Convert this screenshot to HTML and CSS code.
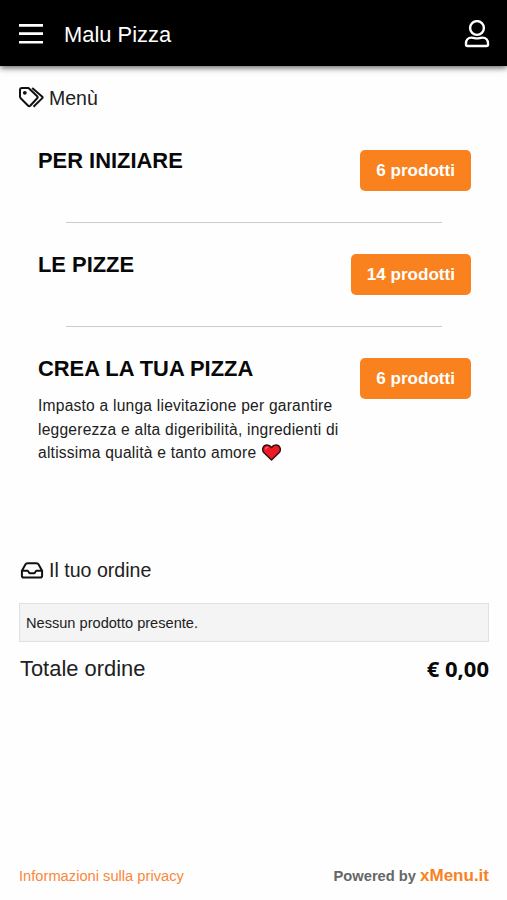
FILE: index.html
```
<!DOCTYPE html>
<html lang="it">
<head>
    <meta charset="UTF-8">
    <meta name="viewport" content="width=device-width, initial-scale=1.0">
    <title>Malu Pizza</title>
    <link rel="stylesheet" href="styles.css">
</head>
<body>
    <header class="navbar">
        <svg class="menu-icon" viewBox="0 0 24 20"><path d="M0 1.4h24M0 9.6h24M0 18.2h24"/></svg>
        <h1>Malu Pizza</h1>
        <svg class="user-icon" viewBox="0 0 26 28">
            <circle cx="13" cy="8" r="6.9"/>
            <path d="M7.5 17.6C10.5 17.6 10.5 18.4 13 18.4S15.5 17.6 18.5 17.6C22 17.6 24 20 24 23.3V24.5Q24 26 22.5 26H3.5Q2 26 2 24.5V23.3C2 20 4 17.6 7.5 17.6Z"/>
        </svg>
    </header>

    <main>
        <h2 class="heading">
            <svg class="tags-icon" viewBox="0 0 25 21">
                <path d="M1 3Q1 1 3 1H9.5L18.2 9.3Q19.2 10.3 18.2 11.3L11.2 18.7Q10.2 19.7 9.2 18.7L1.7 11.3Q1 10.6 1 9.6Z"/>
                <path d="M13.2 1L23.3 9.7Q24 10.4 23.3 11.1L14.5 19.8"/>
                <circle class="dot" cx="5.8" cy="5.8" r="1.9"/>
            </svg>
            <span>Menù</span>
        </h2>

        <ul class="categories">
            <li>
                <div class="info"><h3>PER INIZIARE</h3></div>
                <a class="btn">6 prodotti</a>
            </li>
            <li>
                <div class="info"><h3>LE PIZZE</h3></div>
                <a class="btn">14 prodotti</a>
            </li>
            <li>
                <div class="info">
                    <h3>CREA LA TUA PIZZA</h3>
                    <p>Impasto a lunga lievitazione per garantire<br>leggerezza e alta digeribilità, ingredienti di<br>altissima qualità e tanto amore
                        <svg class="heart" viewBox="0 0 19 17"><path d="M9.5 16L2 8.8C-.8 5.5 1.3 1 5 1C7.2 1 8.7 2.2 9.5 3.5C10.3 2.2 11.8 1 14 1C17.7 1 19.8 5.5 17 8.8Z"/><path class="shine" d="M3.5 5.5Q4 3.3 6 3.2"/></svg>
                    </p>
                </div>
                <a class="btn">6 prodotti</a>
            </li>
        </ul>

        <h2 class="heading order">
            <svg class="inbox-icon" viewBox="0 0 24 17">
                <path d="M1.9 8.7L5.4 2.5Q6.1 1.3 7.5 1.3H16.5Q17.9 1.3 18.6 2.5L22.1 8.7V13.7Q22.1 15.5 20.3 15.5H3.7Q1.9 15.5 1.9 13.7ZM1.9 8.7H7.8L9.5 11.2H14.5L16.2 8.7H22.1"/>
            </svg>
            <span>Il tuo ordine</span>
        </h2>
        <div class="empty">Nessun prodotto presente.</div>
        <div class="total">
            <span>Totale ordine</span>
            <strong>€ 0,00</strong>
        </div>
    </main>

    <footer>
        <a class="privacy">Informazioni sulla privacy</a>
        <div class="powered">Powered by <b>xMenu.it</b></div>
    </footer>
</body>
</html>
```
FILE: styles.css
```
*{
    margin: 0;
    padding: 0;
    box-sizing: border-box;
    list-style: none;
}
body{
    min-height: 900px;
    display: flex;
    flex-direction: column;
    background: #fefefe;
    color: #212121;
    font-family: "Liberation Sans", Arial, sans-serif;
}
svg{
    fill: none;
    stroke: currentColor;
    stroke-width: 2;
    stroke-linejoin: round;
    flex: none;
}
.navbar{
    display: flex;
    align-items: center;
    height: 66px;
    padding: 2px 17px 0 19px;
    background: #000;
    color: #fff;
    box-shadow: 0 2px 6px rgba(0, 0, 0, 0.6);
}
.navbar h1{
    margin-left: 21px;
    padding-top: 1px;
    font-size: 21.9px;
    font-weight: normal;
}
.menu-icon{
    width: 24px;
    height: 20px;
    stroke-width: 2.6;
}
.user-icon{
    width: 26px;
    height: 28px;
    margin-left: auto;
    stroke-width: 2.4;
}
main{
    flex: 1;
    padding: 20px 18px 0 19px;
}
.heading{
    display: flex;
    align-items: center;
    height: 24px;
    font-size: 19.5px;
    font-weight: normal;
}
.heading.order{
    padding-left: 1px;
    font-size: 19.6px;
}
.heading svg{
    margin-right: 5px;
    stroke: #111;
}
.tags-icon{
    width: 25px;
    height: 21px;
    margin-top: -1px;
}
.tags-icon .dot{
    fill: #111;
    stroke: none;
}
.inbox-icon{
    width: 24px;
    height: 17px;
}
.categories{
    padding: 24px 18px 0 19px;
    height: 448px;
}
.categories li{
    display: grid;
    grid-template-columns: 1fr auto;
    padding: 16px 0 31px;
}
.categories li + li{
    padding-top: 0;
}
.categories li:not(:last-child)::after{
    content: "";
    grid-column: 1 / 3;
    height: 1px;
    margin: 30px 29px 0 28px;
    background: #ccc;
}
.info{
    height: 42px;
    white-space: nowrap;
}
.info h3{
    color: #080808;
    font-size: 21.9px;
    line-height: 22px;
}
.info p{
    margin-top: 14px;
    font-size: 15.6px;
    letter-spacing: 0.22px;
    line-height: 23.5px;
}
.heart{
    width: 19px;
    height: 17px;
    margin-left: 1px;
    vertical-align: -3px;
    fill: #ed1925;
    stroke: #321114;
    stroke-width: 1.5;
}
.heart .shine{
    fill: none;
    stroke: #ff6970;
    stroke-width: 1.3;
}
.btn{
    align-self: start;
    height: 41px;
    padding: 0 16px;
    border-radius: 5px;
    background: #f9821e;
    color: #fff;
    font-size: 17.1px;
    font-weight: bold;
    line-height: 41px;
}
.empty{
    height: 39px;
    margin-top: 21px;
    padding-left: 6px;
    border: 1px solid #e1e1e1;
    background: #f4f4f4;
    font-size: 14.6px;
    line-height: 39px;
}
.total{
    display: flex;
    justify-content: space-between;
    margin-top: 14px;
    padding-left: 1px;
    font-size: 21.9px;
    line-height: 26px;
}
.total strong{
    color: #080808;
    font-family: "Noto Sans", "Open Sans", sans-serif;
    font-size: 22px;
    line-height: 24px;
}
footer{
    display: flex;
    justify-content: space-between;
    align-items: baseline;
    padding: 0 18px 14px 19px;
    font-size: 14.7px;
}
.privacy{
    color: #f9883b;
}
.powered{
    color: #666;
    font-weight: bold;
}
.powered b{
    color: #f9821e;
    font-size: 17px;
}
```
